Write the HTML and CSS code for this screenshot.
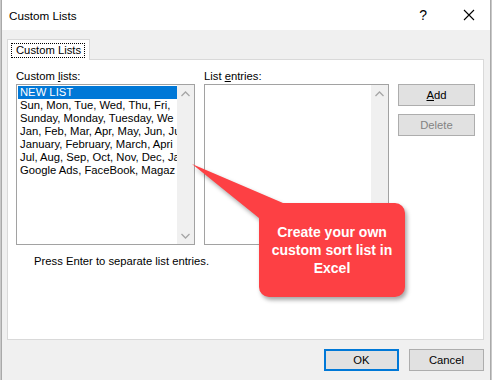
FILE: index.html
```html
<!DOCTYPE html>
<html>
<head>
<meta charset="utf-8">
<link rel="stylesheet" href="styles.css">
</head>
<body>
<div class="dialog">
  <div class="titlebar">
    <span class="title">Custom Lists</span>
    <span class="help">?</span>
    <svg class="close" width="12" height="12" viewBox="0 0 12 12"><path d="M1 1 L11 11 M11 1 L1 11" stroke="#000" stroke-width="1.1" fill="none"/></svg>
  </div>
  <div class="body">
    <div class="tabs">
      <div class="tab"><span class="tab-label">Custom Lists</span></div>
    </div>
    <div class="panel">
      <div class="grid">
        <div class="label">Custom <u>l</u>ists:</div>
        <div class="label">List <u>e</u>ntries:</div>
        <div></div>
        <div class="listbox">
          <div class="items">
            <div class="item selected">NEW LIST</div>
            <div class="item">Sun, Mon, Tue, Wed, Thu, Fri,</div>
            <div class="item">Sunday, Monday, Tuesday, We</div>
            <div class="item">Jan, Feb, Mar, Apr, May, Jun, Ju</div>
            <div class="item">January, February, March, Apri</div>
            <div class="item">Jul, Aug, Sep, Oct, Nov, Dec, Ja</div>
            <div class="item">Google Ads, FaceBook, Magaz</div>
          </div>
          <div class="scrollbar">
            <div class="arrow"><svg width="9" height="6" viewBox="0 0 9 6"><path d="M0.5 5 L4.5 1 L8.5 5" stroke="#a6a6a6" stroke-width="1.3" fill="none"/></svg></div>
            <div class="arrow"><svg width="9" height="6" viewBox="0 0 9 6"><path d="M0.5 1 L4.5 5 L8.5 1" stroke="#a6a6a6" stroke-width="1.3" fill="none"/></svg></div>
          </div>
        </div>
        <div class="listbox">
          <div class="items"></div>
          <div class="scrollbar">
            <div class="arrow"><svg width="9" height="6" viewBox="0 0 9 6"><path d="M0.5 5 L4.5 1 L8.5 5" stroke="#a6a6a6" stroke-width="1.3" fill="none"/></svg></div>
            <div class="arrow"><svg width="9" height="6" viewBox="0 0 9 6"><path d="M0.5 1 L4.5 5 L8.5 1" stroke="#a6a6a6" stroke-width="1.3" fill="none"/></svg></div>
          </div>
        </div>
        <div class="side-buttons">
          <div class="btn"><u>A</u>dd</div>
          <div class="btn disabled">Delete</div>
        </div>
      </div>
      <div class="note">Press Enter to separate list entries.</div>
    </div>
    <div class="footer">
      <div class="btn wide default">OK</div>
      <div class="btn wide">Cancel</div>
    </div>
  </div>
  <svg class="callout-shape" width="230" height="150" viewBox="185 158 230 150">
    <path d="M282 203 L394 203 A10 10 0 0 1 404 213 L404 287 A10 10 0 0 1 394 297 L268 297 A10 10 0 0 1 258 287 L258 218 L191 164 Z" fill="#fd4044"/>
  </svg>
  <div class="callout-text">Create your own<br>custom sort list in<br>Excel</div>
</div>
</body>
</html>
```
FILE: styles.css
```css
html, body {
  margin: 0;
  padding: 0;
}
body {
  background: #c9c9c9;
  font-family: "Liberation Sans", Arial, sans-serif;
  font-size: 11.25px;
  color: #000;
}
.dialog {
  position: relative;
  margin-left: 1px;
  width: 490px;
  height: 380px;
  box-sizing: border-box;
  border-left: 1px solid #a9a9a9;
  border-right: 1px solid #a9a9a9;
  background: #f0f0f0;
  overflow: hidden;
}
.titlebar {
  height: 30px;
  background: #fff;
  display: flex;
  align-items: center;
  padding-left: 7px;
}
.title {
  font-size: 11.7px;
  flex: 1;
}
.help {
  font-size: 14px;
  margin-right: 36px;
}
.close {
  margin-right: 15px;
}
.body {
  padding: 8px 6px 0 5px;
}
.tabs {
  display: flex;
  height: 21px;
}
.tab {
  width: 83px;
  box-sizing: border-box;
  background: #fff;
  border: 1px solid #d9d9d9;
  border-bottom: none;
  padding: 3px 0 0 3px;
  position: relative;
  top: 1px;
}
.tab-label {
  display: block;
  width: 74px;
  height: 15px;
  box-sizing: border-box;
  border: 1px dotted #000;
  padding-left: 4px;
  line-height: 13px;
}
.panel {
  width: 477px;
  height: 281px;
  box-sizing: border-box;
  background: #fff;
  border: 1px solid #d9d9d9;
  padding: 9px 0 0 8px;
}
.grid {
  display: grid;
  grid-template-columns: 179px 185px 77px;
  grid-template-rows: 15px 161px;
  column-gap: 9px;
}
.label {
  line-height: 14px;
}
.listbox {
  display: flex;
  box-sizing: border-box;
  border: 1px solid #a2a2a2;
  padding: 1px 0 1px 1px;
  background: #fff;
}
.items {
  flex: 1;
  min-width: 0;
  overflow: hidden;
}
.item {
  line-height: 13px;
  height: 13px;
  padding-left: 2px;
  white-space: nowrap;
  overflow: hidden;
}
.item.selected {
  background: #0078d7;
  color: #fff;
}
.scrollbar {
  width: 17px;
  margin: -1px 0;
  background: #f0f0f0;
  display: flex;
  flex-direction: column;
  justify-content: space-between;
}
.arrow {
  height: 17px;
  display: flex;
  align-items: center;
  justify-content: center;
}
.side-buttons {
  display: flex;
  flex-direction: column;
  gap: 8px;
}
.btn {
  height: 22px;
  box-sizing: border-box;
  background: #e1e1e1;
  border: 1px solid #adadad;
  display: flex;
  align-items: center;
  justify-content: center;
}
.btn.disabled {
  color: #838383;
}
.note {
  margin-top: 9px;
  padding-left: 18px;
  line-height: 14px;
}
.footer {
  display: flex;
  justify-content: flex-end;
  gap: 10px;
  margin-top: 9px;
}
.btn.wide {
  width: 75px;
}
.btn.default {
  border: 2px solid #0078d7;
}
.callout-shape {
  position: absolute;
  left: 184px;
  top: 158px;
  filter: drop-shadow(2px 3px 2px rgba(0, 0, 0, 0.35));
}
.callout-text {
  position: absolute;
  left: 257px;
  top: 203px;
  width: 146px;
  height: 94px;
  display: flex;
  align-items: center;
  justify-content: center;
  text-align: center;
  color: #fff;
  font-weight: bold;
  font-size: 14px;
  line-height: 18px;
}
```
